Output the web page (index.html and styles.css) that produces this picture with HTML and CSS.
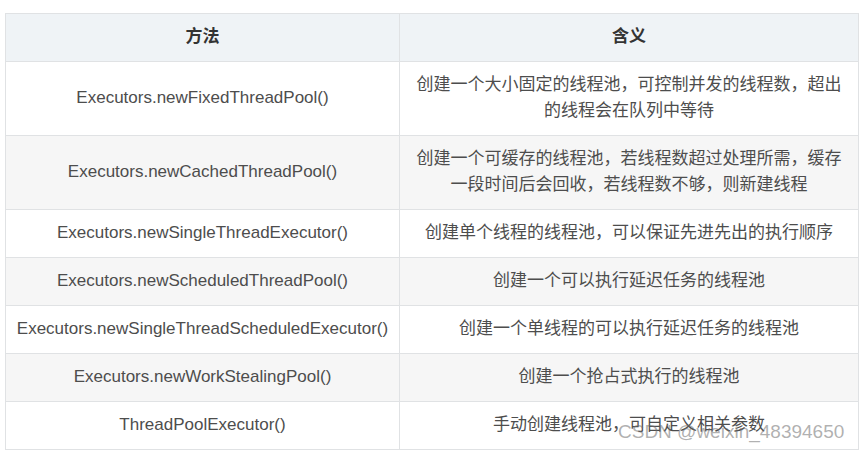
FILE: index.html
```html
<!DOCTYPE html>
<html lang="zh-CN">
<head>
<meta charset="utf-8">
<title>线程池</title>
<link rel="stylesheet" href="styles.css">
</head>
<body>
<div class="wrap">
<table class="tbl">
  <colgroup><col class="c1"><col class="c2"></colgroup>
  <thead>
    <tr><th class="m">方法</th><th class="d">含义</th></tr>
  </thead>
  <tbody>
    <tr><td class="m">Executors.newFixedThreadPool()</td><td class="d">创建一个大小固定的线程池，可控制并发的线程数，超出的线程会在队列中等待</td></tr>
    <tr><td class="m">Executors.newCachedThreadPool()</td><td class="d">创建一个可缓存的线程池，若线程数超过处理所需，缓存一段时间后会回收，若线程数不够，则新建线程</td></tr>
    <tr><td class="m">Executors.newSingleThreadExecutor()</td><td class="d">创建单个线程的线程池，可以保证先进先出的执行顺序</td></tr>
    <tr><td class="m">Executors.newScheduledThreadPool()</td><td class="d">创建一个可以执行延迟任务的线程池</td></tr>
    <tr><td class="m">Executors.newSingleThreadScheduledExecutor()</td><td class="d">创建一个单线程的可以执行延迟任务的线程池</td></tr>
    <tr><td class="m">Executors.newWorkStealingPool()</td><td class="d">创建一个抢占式执行的线程池</td></tr>
    <tr><td class="m">ThreadPoolExecutor()</td><td class="d">手动创建线程池，可自定义相关参数</td></tr>
  </tbody>
</table>
<div class="wm">CSDN @weixin_48394650</div>
</div>
</body>
</html>
```
FILE: styles.css
```css
html, body {
  margin: 0;
  padding: 0;
  background: #ffffff;
}
body {
  padding: 13px 0 0 5px;
}
.wrap {
  position: relative;
  width: 853px;
}
.tbl {
  border-collapse: collapse;
  width: 853px;
  table-layout: fixed;
  font-family: "Liberation Sans", "Noto Sans CJK SC", Arial, sans-serif;
  font-size: 17px;
  line-height: 26px;
  color: #4d4d4d;
}
.c1 { width: 394px; }
.c2 { width: 459px; }
.tbl th, .tbl td {
  border: 1px solid #e0e2e4;
  text-align: center;
  vertical-align: middle;
}
.tbl .m {
  padding: 10px 6px 11px;
}
.tbl .d {
  padding: 10px 15px 11px;
}
.tbl th {
  background: #eff3f6;
  color: #333;
  font-weight: bold;
}
.tbl tbody tr:nth-child(even) td {
  background: #f6f6f6;
}
.wm {
  position: absolute;
  left: 613px;
  top: 408px;
  font-family: "Liberation Sans", Arial, sans-serif;
  font-size: 19px;
  line-height: 22px;
  color: rgba(110, 110, 110, 0.55);
  white-space: nowrap;
}
```
